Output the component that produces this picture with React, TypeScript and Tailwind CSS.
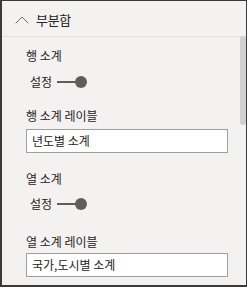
import { ChevronUp } from "lucide-react";

const font = { fontFamily: '"Segoe UI", "Noto Sans CJK KR", sans-serif' };

function Toggle({ label }: { label: string }) {
  return (
    <div className="flex h-4 items-center pl-1 text-[12px] leading-4 text-[#252423]">
      <span>{label}</span>
      <span className="ml-[5px] h-[2px] w-[19px] bg-[#605e5c]" />
      <span className="-ml-px size-3 rounded-full bg-[#605e5c]" />
    </div>
  );
}

function Field({ value }: { value: string }) {
  return (
    <div className="mr-[18px] flex h-6 items-center border border-[#a19f9d] bg-white pl-[5px] text-[12px] text-[#252423]">
      {value}
    </div>
  );
}

export default function App() {
  return (
    <div
      style={font}
      className="relative flex h-[287px] w-[247px] flex-col overflow-hidden border-t border-r border-b-2 border-l-2 border-[#3b3a39] bg-[#f3f2f1]"
    >
      <div className="flex h-9 shrink-0 items-center gap-[2px] border-b border-[#e1dfdd] pt-[2px] pl-2 text-[13px] tracking-[-0.3px] text-[#252423]">
        <ChevronUp aria-hidden size={24} strokeWidth={0.9} className="text-[#605e5c]" />
        <span>부분합</span>
      </div>

      <div className="flex flex-col pl-6 text-[12px] leading-4 text-[#252423]">
        <p className="mt-[11px]">행 소계</p>
        <div className="mt-[10px]">
          <Toggle label="설정" />
        </div>
        <p className="mt-[18px]">행 소계 레이블</p>
        <div className="mt-[5px]">
          <Field value="년도별 소계" />
        </div>
        <p className="mt-[18px]">열 소계</p>
        <div className="mt-[9px]">
          <Toggle label="설정" />
        </div>
        <p className="mt-[22px]">열 소계 레이블</p>
        <div className="mt-[3px]">
          <Field value="국가,도시별 소계" />
        </div>
      </div>

      <div className="absolute top-[35px] right-0 h-[89px] w-[6px] rounded-[3px] bg-[#d2d0ce]" />
    </div>
  );
}
